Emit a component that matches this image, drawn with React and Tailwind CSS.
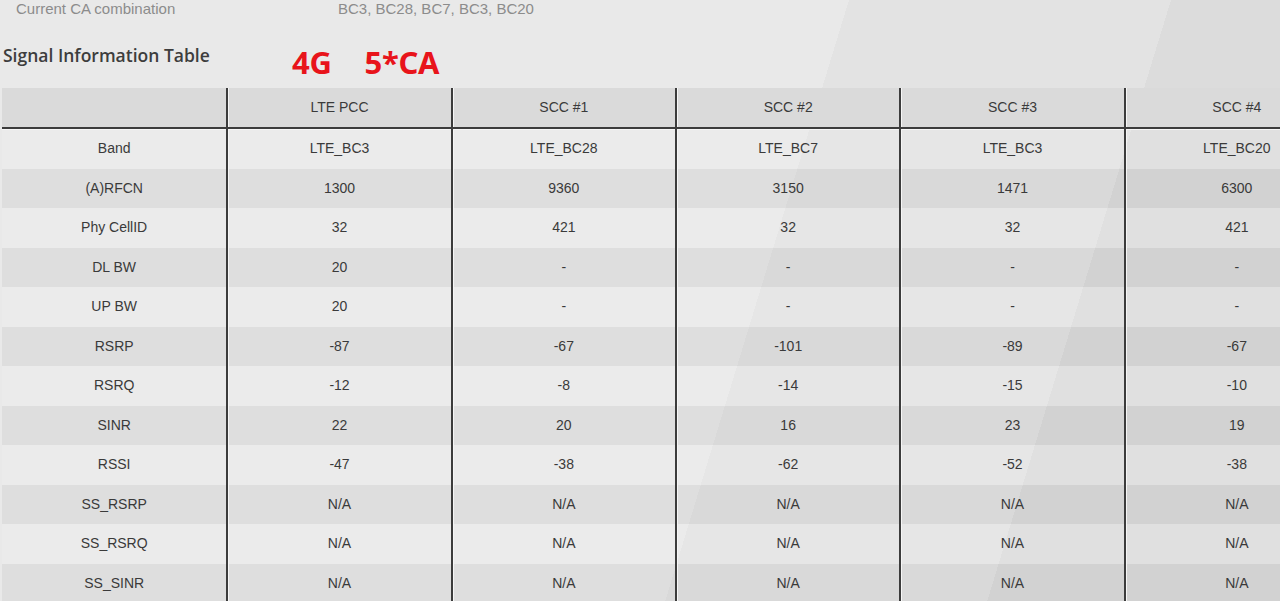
import React from 'react';

const cols = ['LTE PCC', 'SCC #1', 'SCC #2', 'SCC #3', 'SCC #4'];

const rows = [
  ['Band', 'LTE_BC3', 'LTE_BC28', 'LTE_BC7', 'LTE_BC3', 'LTE_BC20'],
  ['(A)RFCN', '1300', '9360', '3150', '1471', '6300'],
  ['Phy CellID', '32', '421', '32', '32', '421'],
  ['DL BW', '20', '-', '-', '-', '-'],
  ['UP BW', '20', '-', '-', '-', '-'],
  ['RSRP', '-87', '-67', '-101', '-89', '-67'],
  ['RSRQ', '-12', '-8', '-14', '-15', '-10'],
  ['SINR', '22', '20', '16', '23', '19'],
  ['RSSI', '-47', '-38', '-62', '-52', '-38'],
  ['SS_RSRP', 'N/A', 'N/A', 'N/A', 'N/A', 'N/A'],
  ['SS_RSRQ', 'N/A', 'N/A', 'N/A', 'N/A', 'N/A'],
  ['SS_SINR', 'N/A', 'N/A', 'N/A', 'N/A', 'N/A'],
];

const Cell = ({ children, first }) => (
  <div
    className={`flex items-center justify-center ${first ? '' : 'border-l-2 border-[#3c3c3c] shadow-[inset_1px_0_0_#f6f6f6]'}`}
  >
    {children}
  </div>
);

export default function App() {
  return (
    <div
      className="relative h-[601px] w-[1280px] overflow-hidden bg-[#e7e7e7] bg-[linear-gradient(107deg,#e9e9e9_0%,#e9e9e9_58%,#e3e3e3_58%,#e3e3e3_80%,#dcdcdc_80%,#dcdcdc_100%)] text-[#3a3a3a]"
      style={{ fontFamily: '"Liberation Sans", Arial, sans-serif' }}
    >
      {/* top info line */}
      <div className="flex h-[19px] items-center text-[15px] text-[#8c8c8c]">
        <div className="w-[338px] pl-[16px]">Current CA combination</div>
        <div>BC3, BC28, BC7, BC3, BC20</div>
      </div>

      {/* heading */}
      <div className="flex h-[69px] items-start">
        <div
          className="w-[292px] pl-[3px] pt-[23px] text-[17.5px] font-semibold text-[#3d3d3d]"
          style={{ fontFamily: '"Open Sans", sans-serif' }}
        >
          Signal Information Table
        </div>
        <div
          className="flex gap-[33px] pt-[28px] text-[31px] font-bold leading-none tracking-[-0.3px] text-[#e8141b]"
          style={{ fontFamily: '"Noto Sans", sans-serif' }}
        >
          <span>4G</span>
          <span>5*CA</span>
        </div>
      </div>

      {/* table */}
      <div className="ml-[2px] w-[1346px] text-[14px] text-[#3a3a3a]">
        <div className="grid h-[41px] grid-cols-6 bg-[#dadada] border-b-2 border-[#3c3c3c] shadow-[0_1px_0_#f6f6f6]">
          <Cell first />
          {cols.map((c) => (
            <Cell key={c}>{c}</Cell>
          ))}
        </div>
        {rows.map((r, i) => (
          <div
            key={r[0]}
            className={`grid h-[39.5px] grid-cols-6 ${i % 2 === 0 ? 'bg-white/[0.12]' : 'bg-black/[0.045]'}`}
          >
            {r.map((v, j) => (
              <Cell key={j} first={j === 0}>
                {v}
              </Cell>
            ))}
          </div>
        ))}
      </div>
    </div>
  );
}
